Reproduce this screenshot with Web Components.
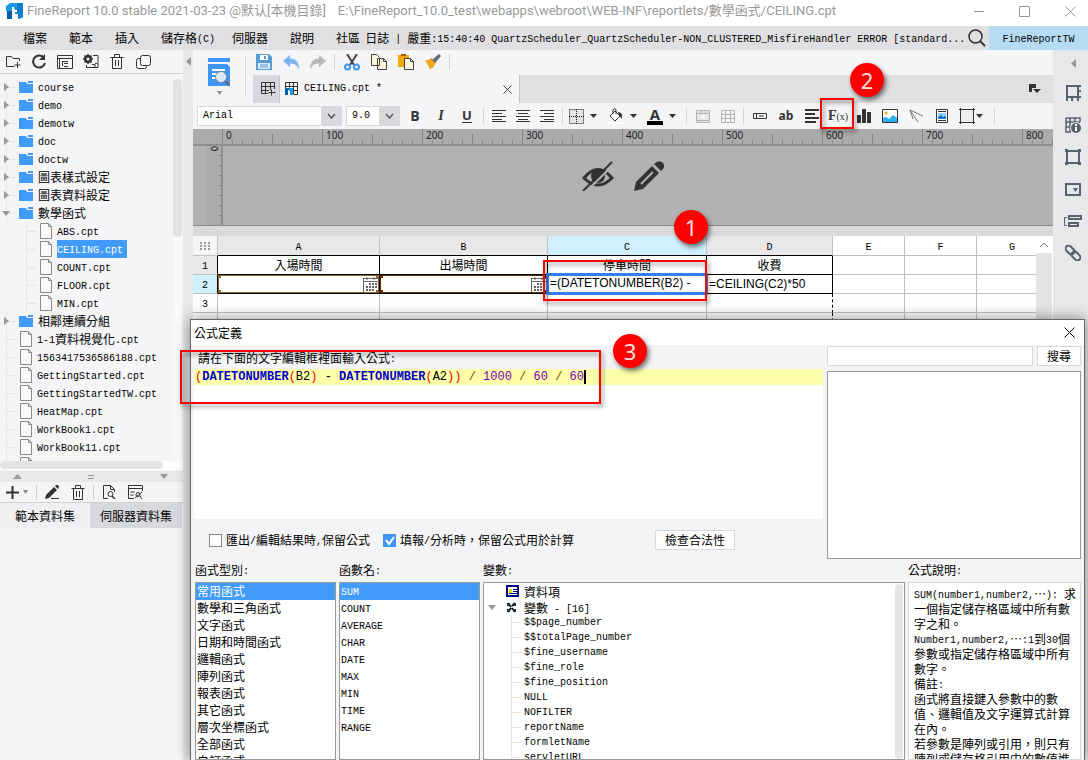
<!DOCTYPE html>
<html lang="zh-Hant">
<head>
<meta charset="utf-8">
<title>FineReport Designer</title>
<style>
html,body{margin:0;height:100%;overflow:hidden}
body{font:12px/18px "Noto Sans CJK TC",sans-serif;color:#000;background:#f5f5f7}
</style>
</head>
<body>
<fr-app></fr-app>
<script>
const BASE = `
*{box-sizing:border-box}
:host{display:block}
button{font:inherit;color:inherit;background:none;border:0;padding:0;margin:0;display:flex;align-items:center;justify-content:center;flex:none}
ul{list-style:none;margin:0;padding:0}
.a{font:10px/10px "Liberation Mono",monospace;white-space:pre;vertical-align:1px}
svg{display:block;flex:none}
`;
// Half-width runs are set in a 6px-advance monospace, full-width runs in the 12px CJK face.
const m = s => s.replace(/[\x20-\x7e]+/g, r => `<span class="a">${r}</span>`);

function define(name, css, html) {
  customElements.define(name, class extends HTMLElement {
    constructor() {
      super();
      this.attachShadow({mode: 'open'});
    }
    connectedCallback() {
      this.shadowRoot.innerHTML = `<style>${BASE}${css}</style>` + (typeof html === 'function' ? html(this) : html);
    }
  });
}

const S = 'fill="none" stroke="#333"';
const ICONS = {
  logo: [17,17,'<path d="M4 0h13v14l-4 2v-5H9V6H6v2H0V3z" fill="#1798e0"/><path d="M11 0h6v14l-5 2v-5h-1z" fill="#0a7fd0"/><path d="M1 8h5v8H1z" fill="#0b5fa8"/><path d="M6 4h2v8H6zM8 7h3v2H8z" fill="#fff"/>'],
  newfolder: [16,14,`<path d="M14.500 6V3.500H8L6.500 1.500H1.500v10h8M12.500 7v6M9.500 10h6" ${S}/>`],
  refresh: [15,15,`<path d="M12 4A6 6 0 1 0 13 9" ${S} stroke-width="2"/><path d="M13 0v6H7z" fill="#333"/>`],
  listbox: [16,14,`<path d="M.5.5h15v13H.500zM.5 3.500h15M2.500 3.500v10M5 6.500h6M5.500 6v5M7 8.500h4M7 11.500h4" ${S}/>`],
  gearbox: [16,15,`<circle cx="5" cy="5" r="3" ${S} stroke-width="2"/><path d="M5 0v10M0 5h10M1.500 1.500l7 7M8.500 1.500l-7 7" stroke="#333" stroke-width="1.500"/><circle cx="5" cy="5" r="1.500" fill="#f5f5f7"/><path d="M10 1.500h5v12H3.500V11M9 10.500h3v3M12 9.500h2" ${S}/>`],
  trash: [14,15,`<path d="M.5 3.500h13M4.500 3V.500h5V3M2.500 4v10.500h9V4M5.500 6v6M8.500 6v6" ${S}/>`],
  copies: [15,14,`<rect x="4.500" y=".5" width="10" height="10" rx="2" ${S}/><path d="M4 3.500H2.500a2 2 0 0 0-2 2v6a2 2 0 0 0 2 2h6a2 2 0 0 0 2-2V11" ${S}/>`],
  folder: [14,12,'<path d="M0 1h7l1 2h6v9H0z" fill="#419bf9"/><path d="M9 0h5v2H9z" fill="#419bf9"/>'],
  file: [12,16,'<path d="M.5.5h8l3 3v12H.500z" fill="#fafafa" stroke="#888"/><path d="M8.500.5v3h3" fill="none" stroke="#888"/>'],
  right: [5,8,'<path d="M0 0l5 4-5 4z" fill="#999"/>'],
  left: [5,9,'<path d="M5 0v9L0 4.500z" fill="#999"/>'],
  down: [8,5,'<path d="M0 0h8L4 5z" fill="#999"/>'],
  sdown: [5,4,'<path d="M0 0h5L2.500 4z" fill="#888"/>'],
  up: [9,5,'<path d="M0 5h9L4.500 0z" fill="#999"/>'],
  grip: [6,4,'<path d="M0 .5h6M0 3.500h6" stroke="#999"/>'],
  tri: [7,4,'<path d="M0 0h7L3.500 4z" fill="#333"/>'],
  plus: [13,13,'<path d="M6.500 0v13M0 6.500h13" stroke="#333" stroke-width="2"/>'],
  pen: [14,14,'<path d="M1 10l8-8 3 3-8 8-4 1zM10 1l1-1h2l1 2-1 2z" fill="#333"/><path d="M6 13.500h8" stroke="#333"/>'],
  docfind: [13,14,`<path d="M5 13.500H.500V.500h7l4 4V7M7.500.5v4h4" ${S}/><circle cx="7.500" cy="9" r="2.500" ${S}/><path d="M9 11l3 3" ${S} stroke-width="1.500"/>`],
  panelfind: [15,14,`<path d="M6 13.500H.500V.500h14V6M.5 3.500h14M2.500 7h4M2.500 10h3" ${S}/><circle cx="10" cy="9.500" r="2" ${S}/><path d="M14 7l-7 6M12 11l2 3" ${S}/>`],
  search: [18,18,`<circle cx="7.500" cy="7.500" r="6.500" ${S} stroke-width="1.500"/><path d="M12 12l5 5" ${S} stroke-width="2"/>`],
  preview: [22,29,'<path d="M0 0h22v4H0zM0 6h19l3 3v19H0z" fill="#3d95f5"/><path d="M4 12h13M4 16h5M4 20h4" stroke="#fff" stroke-width="2"/><circle cx="13" cy="19" r="5" fill="#d8e9f8" stroke="#fff" stroke-width="1"/><circle cx="13" cy="19" r="5.500" fill="none" stroke="#7a8794"/><path d="M17 23l4 4" stroke="#667" stroke-width="2"/>'],
  save: [16,16,'<path d="M0 0h13l3 3v13H0z" fill="#5a9bd9"/><path d="M4 1h8v5H4z" fill="#fff"/><path d="M2 9h12v6H2z" fill="#dbe9f7"/><path d="M8 2h2v3H8z" fill="#5a9bd9"/><path d="M4 11h8M4 13h8" stroke="#5a9bd9"/>'],
  undo: [16,15,'<path d="M0 6l7-6v3.500c6 0 9 4 9 11-2-4-4-6-9-6V12z" fill="#7ab3ee"/>'],
  redo: [16,15,'<path d="M16 6L9 0v3.500c-6 0-9 4-9 11 2-4 4-6 9-6V12z" fill="#b8b8ba"/>'],
  cut: [16,17,'<path d="M3 0l7 11M13 0L6 11" stroke="#444" stroke-width="2"/><circle cx="3.500" cy="13" r="2.500" fill="none" stroke="#3d95f5" stroke-width="2"/><circle cx="12.500" cy="13" r="2.500" fill="none" stroke="#3d95f5" stroke-width="2"/>'],
  copy: [16,16,'<path d="M.5.500h5l3 3v8h-8zM6.500 4.500h6l3 3v8h-9z" fill="#fff4dc" stroke="#444"/><path d="M12.500 4.500v3h3" fill="none" stroke="#444"/>'],
  paste: [16,16,'<path d="M0 1h11v12H0z" fill="#f5a800"/><path d="M3 0h5v2H3z" fill="#a35b14"/><path d="M6.500 4.500h6l3 3v8h-9z" fill="#fff4dc" stroke="#444"/><path d="M12.500 4.500v3h3" fill="none" stroke="#444"/>'],
  brush: [16,16,'<path d="M14 0l2 2-6 7-3-3z" fill="#5c6b7c"/><path d="M6 4l5 5-1 1-5-5z" fill="#c97f10"/><path d="M5 5l5 5c-1 3-2 4-5 5L0 6c3 0 3 0 5-1z" fill="#f3a71b"/>'],
  addtab: [15,14,`<path d="M7 11.500H.500V.500h13V7M.5 4.500h13M.5 8.500H8M4.500.5v11M9.500.5V8M10.500 7.500v6M7.500 10.500h7" ${S}/>`],
  cpt: [14,14,'<path d="M.5 6V.500h12v12H9M.5 4.500h12M4.500.5v5M8.500.5v12M8 8.500h4" fill="none" stroke="#333"/><path d="M0 6h5v3H3v4H0z" fill="#0a5fb0"/><path d="M4 6h4v7H5V9H4z" fill="#1aa0e8"/><path d="M3 8h1v5H3z" fill="#fff"/>'],
  x: [9,9,'<path d="M.5.500l8 8M8.500.500l-8 8" stroke="#444" fill="none"/>'],
  closebig: [11,11,'<path d="M.5.500l10 10M10.500.500l-10 10" stroke="currentColor" fill="none"/>'],
  max: [11,11,'<path d="M.5.500h10v10H.500z" stroke="#999" fill="none"/>'],
  min: [10,11,'<path d="M0 5.500h10" stroke="#999"/>'],
  corner: [12,10,'<path d="M0 0h7v4H3v4H0z" fill="#333"/><path d="M4 5h8L8 9z" fill="#333"/>'],
  chev: [9,6,'<path d="M1 1l3.500 4L8 1" fill="none" stroke="#555" stroke-width="1.500"/>'],
  chevup: [10,6,'<path d="M1 5l4-4 4 4" fill="none" stroke="#777"/>'],
  alignl: [14,12,`<path d="M0 .5h14M0 3.500h10M0 6.500h14M0 9.500h10M0 11.500h14" ${S}/>`],
  alignc: [14,12,`<path d="M0 .5h14M2 3.500h10M0 6.500h14M2 9.500h10M0 11.500h14" ${S}/>`],
  alignr: [14,12,`<path d="M0 .5h14M4 3.500h10M0 6.500h14M4 9.500h10M0 11.500h14" ${S}/>`],
  border: [15,15,'<path d="M.5.500h14v14H.500zM7.500 0v15M0 7.500h15" fill="#e4e4e6" stroke="#111" stroke-dasharray="1 1"/>'],
  fill: [16,16,'<path d="M2 8l5-5 5 5-5 5z" fill="#fff" stroke="#333"/><path d="M5 6V2q2-3 3 0v4" fill="none" stroke="#333"/><path d="M10 4q5 0 4 7-1-2-3-3z" fill="#333"/><path d="M0 14h16v2H0z" fill="#fff"/>'],
  merge: [14,13,'<path d="M.5.500h13v12H.500zM.5 3.500h13M4.500.5v3M9.500.5v3M.5 10.500h13" fill="#e6e6e8" stroke="#b4b4b6"/><path d="M5 5h4v4H5z" fill="#f8f8f8"/>'],
  grid: [14,13,'<path d="M.5.500h13v12H.500zM.5 4.500h13M.5 8.500h13M4.500.5v12M9.500.5v12" fill="none" stroke="#b4b4b6"/>'],
  widget: [14,6,`<path d="M.5.500h13v5H.500zM3.500.5v5M6 3h5" ${S}/>`],
  lines: [15,14,'<path d="M0 1h14M0 5h10M0 9h14M0 13h11" stroke="#333" stroke-width="2"/>'],
  chart: [14,14,'<path d="M0 6h4v8H0zM5 0h4v14H5zM10 3h4v11h-4z" fill="#333"/>'],
  image: [16,14,'<path d="M.5.500h15v13H.500z" fill="#fff" stroke="#333"/><path d="M1 9l3-1 3 2 4-4 4 3v4H1z" fill="#2ab0f2"/><circle cx="4" cy="4" r="1.500" fill="#f5a800"/>'],
  slash: [14,14,'<path d="M14 7L1 1l8 12M1 1l3 9" fill="none" stroke="#777"/>'],
  report: [12,14,'<path d="M.5.500h11v13H.500z" fill="#fff" stroke="#333"/><path d="M2 2.500h8M2 11.500h8" stroke="#333"/><path d="M2 4h8v6H2z" fill="#8ed2fa"/><path d="M2 8l3-2 2 2 3-1v3H2z" fill="#0b77d0"/>'],
  shape: [16,16,'<path d="M1.500 1.500h13v13h-13z" fill="#eee" stroke="#333"/><path d="M0 1.500h3M1.500 0v3M13 1.500h3M14.500 0v3M0 14.500h3M1.500 13v3M13 14.500h3M14.500 13v3" stroke="#333"/>'],
  eyeoff: [32,30,'<path d="M2 17q14-17 28 0-14 14-28 0z" fill="none" stroke="#333" stroke-width="3"/><circle cx="16" cy="15" r="7" fill="#333"/><path d="M32 3L5 30" stroke="#b2b2b2" stroke-width="2"/><path d="M30 1L1 30" stroke="#333" stroke-width="2"/>'],
  bigpen: [30,30,'<path d="M0 30l2-9L18 5l7 7L9 28z" fill="#333"/><path d="M20 3q5-5 9-1 3 4-2 8z" fill="#333"/><path d="M7 23L19 11" stroke="#b2b2b2" stroke-width="2"/>'],
  r1: [17,17,'<path d="M2 1h11v11H2zM13 1h3M13 6h3M13 12h3M2 12v4M7 12v4M13 12v4" fill="none" stroke="#596070" stroke-width="2"/>'],
  r2: [17,17,'<path d="M1 1h14v4M1 1v14h5M1 5h14M5 1v14M10 1v4M1 10h5" fill="none" stroke="#596070" stroke-width="1.500"/><circle cx="11" cy="11" r="6" fill="#e8e8ea"/><circle cx="11" cy="11" r="5" fill="#596070"/><path d="M11 10v4M11 7v2" stroke="#fff" stroke-width="2"/>'],
  r3: [16,16,'<path d="M2 2h12v12H2z" fill="none" stroke="#596070" stroke-width="2"/><path d="M0 0h3v3H0zM13 0h3v3h-3zM0 13h3v3H0zM13 13h3v3h-3z" fill="#596070"/>'],
  r4: [16,13,'<path d="M1 1h14v11H1z" fill="none" stroke="#596070" stroke-width="2"/><path d="M8 5h5l-2.500 4z" fill="#596070"/>'],
  r5: [18,13,'<path d="M5 1h12v3H5zM5 8h9v3H5z" fill="none" stroke="#596070" stroke-width="2"/><path d="M3 2.500H.500v8H3" fill="none" stroke="#596070"/>'],
  r6: [16,16,'<g fill="none" stroke="#596070" stroke-width="2"><rect x="0" y="2" width="10" height="6" rx="3" transform="rotate(45 5 5)"/><rect x="6" y="8" width="10" height="6" rx="3" transform="rotate(45 11 11)"/></g>'],
  cal: [15,15,'<path d="M.5 1v14M0 1.500h15M0 4.500h15M4 0v3M11 0v3" fill="none" stroke="#666" stroke-width="1"/><path d="M6 7h9M3 10h12M3 13h9" stroke="#666" stroke-width="2" stroke-dasharray="2 1"/>'],
  dots: [10,8,'<path d="M0 1h10M0 4h10M0 7h10" stroke="#999" stroke-width="2" stroke-dasharray="2 2"/>'],
  data: [13,12,'<path d="M1 1h11v10H1z" fill="#fff" stroke="#00008b" stroke-width="2"/><path d="M3 4h3v4H3z" fill="#dd0"/><path d="M7 4.500h4M7 6.500h4M3 8.500h8" stroke="#00008b"/>'],
  vars: [11,11,'<path d="M2 1l3 4M9 1L6 4M2 10l3-4M9 10L6 6" stroke="#111" stroke-width="2"/><path d="M1 1h3v3H1zM7 1h3v3H7zM1 7h3v3H1zM7 7h3v3H7z" fill="#234"/>']
};
define('fr-icon', ':host{display:block;flex:none}', e => {
  const [w, h, p] = ICONS[e.getAttribute('name')];
  return `<svg width="${w}" height="${h}" viewBox="0 0 ${w} ${h}" aria-hidden="true">${p}</svg>`;
});
const ic = n => `<fr-icon name="${n}"></fr-icon>`;
const btn = (n, label, cls = '') => `<button class="${cls}" aria-label="${label}">${ic(n)}</button>`;

define('fr-titlebar', `
:host{display:flex;align-items:center;height:26px;background:#fff;color:#999;font:13px/20px Roboto,"Noto Sans CJK TC",sans-serif;padding:0 12px 4px 6px;white-space:nowrap;flex:none}
.n{margin:0 12px 0 4px}.s{flex:1;overflow:hidden}
.w{display:flex;gap:35px}`, `
${ic('logo')}<span class="n">FineReport 10.0 stable 2021-03-23 @默认[本機目錄]</span>
<span class="s">E:\\FineReport_10.0_test\\webapps\\webroot\\WEB-INF\\reportlets/數學函式/CEILING.cpt</span>
<div class="w">${btn('min','最小化')}${btn('max','最大化')}${btn('closebig','關閉')}</div>`);

define('fr-menubar', `
:host{display:flex;align-items:center;height:24px;background:#e0e0e3;flex:none;white-space:nowrap}
nav{display:flex;gap:22px;padding-left:23px}
.t{margin-right:-5px}
.log{margin-left:5px;flex:1;overflow:hidden}
.user{width:99px;height:24px;background:#b6dcf5}
.q{width:24px}`, `
<nav>${['檔案','範本','插入'].map(t => `<button>${t}</button>`).join('')}<button class="t"><span>${m('儲存格(C)')}</span></button><button>伺服器</button><button>說明</button><button>社區</button></nav>
<div class="log">${m('日誌 | 嚴重:15:40:40 QuartzScheduler_QuartzScheduler-NON_CLUSTERED_MisfireHandler ERROR [standard...')}</div>
<button class="q" aria-label="搜尋">${ic('search')}</button><button class="user"><span>${m('FineReportTW')}</span></button>`);

const TREE = [['course',0],['demo',0],['demotw',0],['doc',0],['doctw',0],['圖表樣式設定',0],['圖表資料設定',0],['數學函式',1],['ABS.cpt',2],['CEILING.cpt',3],['COUNT.cpt',2],['FLOOR.cpt',2],['MIN.cpt',2],['相鄰連續分組',0],['1-1資料視覺化.cpt',4],['1563417536586188.cpt',4],['GettingStarted.cpt',4],['GettingStartedTW.cpt',4],['HeatMap.cpt',4],['WorkBook1.cpt',4],['WorkBook11.cpt',4],['WorkBook2.cpt',4]];
define('fr-sidebar', `
:host{display:flex;flex-direction:column;width:183px;flex:none;background:#f5f5f7}
.bar{display:flex;align-items:center;height:24px;border-bottom:1px solid #d0d0d4;flex:none}
.bar button{width:26px}
.tree{display:flex;height:387px;overflow:hidden;flex:none}
.tree ul{flex:1;padding-top:4px;overflow:hidden}
li{display:flex;align-items:center;height:18px;white-space:nowrap;background:linear-gradient(#e6e6ea,#e6e6ea) 6px 9px/10px 1px no-repeat,linear-gradient(#e6e6ea,#e6e6ea) 6px 0/1px 18px no-repeat}
.k{width:20px;flex:none;padding-left:4px}.k.o{padding-left:2px}
.k.d{width:19px}
.l2 .k{width:40px}.l2{background:linear-gradient(#e6e6ea,#e6e6ea) 26px 9px/10px 1px no-repeat,linear-gradient(#e6e6ea,#e6e6ea) 26px 0/1px 18px no-repeat}
li>fr-icon{margin-right:5px}
.sel b{background:#419bf9;color:#fff;padding-right:4px}
b{font-weight:400;line-height:18px}
.vs{width:9px;margin:5px 1px 0 0;background:#fafafa}.vs i{display:block;height:158px;border-radius:4px;background:#e2e2e4}
.hs{height:9px;background:#fff;flex:none}.hs i{display:block;width:163px;height:8px;border-radius:4px;background:#e4e4e6}
.sp{height:11px;background:#e8e8ea;display:flex;align-items:center;justify-content:space-between;padding:0 15px 0 13px;flex:none;margin-top:1px}
.bar2{height:21px}
.bar2 s{width:1px;height:15px;background:#d0d0d4;margin:0 2px}
.bar2 .p{gap:4px;width:34px}
.tabs{display:flex;height:25px}.tabs button{flex:1;background:#f0f0f2;height:25px}.tabs .on{background:#d8d9dc;flex:none;width:92px;margin-right:1px}`, `
<div class="bar">${btn('newfolder','新增資料夾')}${btn('refresh','重新整理')}${btn('listbox','瀏覽')}${btn('gearbox','設定')}${btn('trash','刪除')}${btn('copies','複製')}</div>
<div class="tree"><ul role="tree">${TREE.map(([t,k]) => `<li role="treeitem" class="${k==2||k==3?'l2':''} ${k==3?'sel':''}"><span class="k ${k==1?'o':''} ${k<2?'d':''}">${k==0?ic('right'):k==1?ic('down'):''}</span>${ic(k<2?'folder':'file')}<b>${m(t)}</b></li>`).join('')}</ul><div class="vs"><i></i></div></div>
<div class="hs"><i></i></div>
<div class="sp">${ic('up')}${ic('grip')}${ic('down')}</div>
<div class="bar bar2"><button class="p" aria-label="新增">${ic('plus')}${ic('sdown')}</button><s></s>${btn('pen','編輯')}${btn('trash','刪除')}<s></s>${btn('docfind','預覽')}${btn('panelfind','連線')}</div>
<div class="tabs" role="tablist"><button role="tab">範本資料集</button><button role="tab" class="on">伺服器資料集</button></div>`);

define('fr-combo', `
:host{display:block;height:20px;border:1px solid #d8d8dc;background:#fff}
.b{display:grid;grid-template-columns:1fr 20px;height:18px}
select{appearance:none;grid-area:1/1/2/3;border:0;background:none;margin:0;padding:0 0 0 5px;font:10px/18px "Liberation Mono",monospace;color:#000;width:100%}
.c{grid-area:1/2;background:#d8d9dc;display:flex;align-items:center;justify-content:center;pointer-events:none}`,
e => `<div class="b"><span class="c">${ic('chev')}</span><select aria-label="${e.getAttribute('label')}"><option>${e.getAttribute('value')}</option></select></div>`);

define('fr-toolbar', `
:host{display:block;background:#f5f5f7;flex:none}
.top{display:flex;height:53px}
.pv{width:52px;flex-direction:column;gap:4px}
.v{width:1px;height:41px;margin-top:6px;background:#d4d4d8;flex:none}
.r{flex:1;padding-left:4px}
.row{display:flex;align-items:center;height:24px}
.row .t{width:27px}
s{width:1px;height:16px;background:#d4d4d8;margin:0 3px;flex:none}
.tabs{display:flex;height:28px;margin:1px 0 0 3px;background:#e0e0e3;align-items:stretch}
.add{width:27px;background:#d8d8dc;border-right:1px solid #c4c4c8;padding-left:4px}
.tab{display:flex;align-items:center;gap:5px;width:240px;background:#f5f5f7;border-right:1px solid #c4c4c8;padding:0 7px 0 5px}
.tab span{flex:1}
.cn{margin:0 12px 0 auto}
.fmt{display:flex;align-items:center;height:26px;padding-left:4px}
.f1{width:145px;margin-right:4px}.f2{width:54px;margin-right:2px}
.fmt button{width:26px;height:22px;color:#333}
.fmt .w24{width:24px}.fmt .w25{width:25px}
.fmt .d{width:39px;gap:6px;justify-content:flex-start;padding-left:3px}
.fmt .e{width:36px;gap:1px;justify-content:flex-start;padding-left:4px}
.B{font:700 14px/18px "Open Sans",sans-serif}.I{font:italic 700 14px/18px "Liberation Serif",serif}
.U{font:700 13px/13px "Open Sans",sans-serif;border-bottom:1px solid #333}
.A{font:700 15px/12px "Open Sans",sans-serif;border-bottom:4px solid #000;width:16px;height:17px}
.ab{font:700 12px/16px "Open Sans",sans-serif}
.F{font:700 14px/18px "Liberation Serif",serif}.F small{font-weight:400;font-size:10px}`, `
<div class="top"><button class="pv" aria-label="預覽">${ic('preview')}${ic('sdown')}</button><div class="v"></div>
<div class="r"><div class="row">${btn('save','儲存','t')}${btn('undo','復原','t')}${btn('redo','重做','t')}<s></s>${btn('cut','剪下','t')}${btn('copy','複製','t')}${btn('paste','貼上','t')}${btn('brush','格式刷','t')}<s></s></div>
<div class="tabs">${btn('addtab','新增範本','add')}<div class="tab">${ic('cpt')}<span class="a">CEILING.cpt *</span>${btn('x','關閉')}</div>${btn('corner','範本清單','cn')}</div></div></div>
<div class="fmt"><fr-combo class="f1" label="字型" value="Arial"></fr-combo><fr-combo class="f2" label="字號" value="9.0"></fr-combo>
<button><span class="B">B</span></button><button><span class="I">I</span></button><button><span class="U">U</span></button><s></s>
${btn('alignl','靠左','w24')}${btn('alignc','置中','w24')}${btn('alignr','靠右','w24')}<s></s>
<button class="d" aria-label="框線">${ic('border')}${ic('tri')}</button><button class="d" aria-label="填滿">${ic('fill')}${ic('tri')}</button><button class="d"><span class="A">A</span>${ic('tri')}</button><s></s>
${btn('merge','合併','w25')}${btn('grid','取消合併','w25')}<s></s>
${btn('widget','控件')}<button><span class="ab">ab</span></button>${btn('lines','富文字')}<button><span class="F">F<small>(x)</small></span></button>${btn('chart','圖表')}${btn('image','圖片')}${btn('slash','斜線')}${btn('report','子報表')}<button class="e" aria-label="浮動元素">${ic('shape')}${ic('tri')}</button><s></s></div>`);

define('fr-canvas', `
:host{display:block;background:#b2b2b2;flex:none;height:97px;border-bottom:1px solid #888;overflow:hidden}
.h{display:flex;height:17px;background:#ababab;border-bottom:2px solid #8e8e8e;padding-left:29px}
.h span{width:100px;flex:none;height:15px;border-left:1px solid #888;padding-left:3px;font:10px/13px "Noto Sans",sans-serif;color:#222;background:linear-gradient(#888,#888) 49px 5px/1px 10px no-repeat,repeating-linear-gradient(90deg,transparent 0 9px,#888 9px 10px) 0 11px/100% 4px no-repeat}
.b{display:flex;height:79px}
.v{width:17px;margin-left:13px;background:repeating-linear-gradient(#ababab 0 9px,#888 9px 10px) 12px 0/4px 100% no-repeat #ababab;border-right:2px solid #8e8e8e;writing-mode:vertical-rl;font:9px/14px "Noto Sans",sans-serif}
.m{flex:1;display:flex;gap:20px;padding:15px 0 0 359px;align-items:flex-start}`, `
<div class="h">${[0,1,2,3,4,5,6,7,8].map(i => `<span>${i*100}</span>`).join('')}</div>
<div class="b"><div class="v">0</div><div class="m">${btn('eyeoff','隱藏')}${btn('bigpen','編輯')}</div></div>`);

define('fr-sheet', `
:host{display:flex;background:#fff;flex:1;border-top:10px solid #dadadc;min-height:0}
.g{flex:1;overflow:hidden}
table{table-layout:fixed;border-spacing:0;width:855px}
th,td{height:19px;padding:0;border:solid #c0c0c0;border-width:0 1px 1px 0;font-weight:400;text-align:center;line-height:18px;overflow:hidden;white-space:nowrap}
thead th{height:20px}
th.h{background:#e8e8e8;border-bottom-color:#000}thead th.c{background:#d0f0fb}
tbody th{background:#e8e8e8;border-right-color:#000}tbody th.c{background:#d0f0fb}
tbody th.p{background:#fff;border-right-color:#c0c0c0}
.k{border-color:#000}
.k2{overflow:visible}
.o{height:18px;border:1px solid;display:flex;justify-content:flex-end;align-items:flex-end;background:linear-gradient(currentColor,currentColor) 0 0/2px 2px no-repeat,linear-gradient(currentColor,currentColor) 0 100%/2px 2px no-repeat,linear-gradient(currentColor,currentColor) 100% 0/2px 2px no-repeat,linear-gradient(currentColor,currentColor) 100% 100%/2px 2px no-repeat}
.f{height:18px;font:12px/18px "Liberation Sans",sans-serif;text-align:left;padding-left:2px}
.s{line-height:16px;outline:3px solid #3281e8;outline-offset:-1px;background:#fff;position:relative}
.d{border-right:1px dashed #000}
.cr div{display:flex;justify-content:center}
.cr{background:#f5f5f7}
.sb{width:16px;background:#e4e4e6;margin-right:1px}.sb button{width:16px;height:17px;background:#fff}`, `
<div class="g"><table><colgroup>${[25,162,168,159,126,72,72,71].map(w => `<col style="width:${w}px">`).join('')}</colgroup>
<thead><tr><th class="cr"><div>${ic('dots')}</div></th><th class="h">${m('A')}</th><th class="h">${m('B')}</th><th class="h c">${m('C')}</th><th class="h">${m('D')}</th><th>${m('E')}</th><th>${m('F')}</th><th>${m('G')}</th></tr></thead>
<tbody><tr><th>${m('1')}</th><td class="k">入場時間</td><td class="k">出場時間</td><td class="k">停車時間</td><td class="k">收費</td><td></td><td></td><td></td></tr>
<tr><th class="c">${m('2')}</th><td class="k"><div class="o" style="color:#96632f">${ic('cal')}</div></td><td class="k"><div class="o" style="color:#5e3000">${ic('cal')}</div></td><td class="k k2"><div class="f s">=(DATETONUMBER(B2) -</div></td><td class="k"><div class="f">=CEILING(C2)*50</div></td><td></td><td></td><td></td></tr>
<tr><th class="p">${m('3')}</th><td></td><td></td><td></td><td class="d"></td><td></td><td></td><td></td></tr>
<tr><th class="p">${m('4')}</th><td></td><td></td><td></td><td class="d"></td><td></td><td></td><td></td></tr></tbody></table></div>
<div class="sb">${btn('chevup','向上')}</div>`);

define('fr-rail', `
:host{display:flex;flex-direction:column;width:35px;flex:none;background:#e8e8ea;padding-left:5px}
button{height:32px;width:30px}.f{height:27px}`, `
${btn('left','展開','f')}${['儲存格元素','儲存格屬性','懸浮元素','控件設定','條件屬性','超連結'].map((t,i) => btn('r'+(i+1),t)).join('')}`);

define('fr-list', `
:host{display:block;background:#fff;border:1px solid #999;overflow:hidden}
li{height:17px;line-height:16px;padding-left:1px;white-space:nowrap}
.on{background:#419bf9;color:#fff}`,
e => `<ul role="listbox" aria-label="${e.getAttribute('label')}">${e.getAttribute('items').split(',').map((t,i) => `<li role="option" class="${i?'':'on'}">${m(t)}</li>`).join('')}</ul>`);

define('fr-dialog', `
:host{display:flex;flex-direction:column;background:#f4f4f6;border:1px solid #666;border-bottom:0;box-shadow:0 0 14px rgba(0,0,0,.45);overflow:hidden}
header{display:flex;align-items:center;justify-content:space-between;height:25px;background:#fff;padding:0 9px 0 3px;flex:none}
.up{display:grid;grid-template-columns:1fr 254px;gap:4px;padding:1px 3px 0;flex:none}
.lb{height:23px;line-height:24px;padding-left:4px;white-space:nowrap}
.ed{height:150px;background:linear-gradient(#ffffaa,#ffffaa) 0 0/100% 16px no-repeat #fff;font:12px/16px "Liberation Mono",monospace;padding-left:1px;white-space:pre;outline:0}
.ed b{color:#00c}.ed i{font-style:normal;color:#e00}.ed u{text-decoration:none;color:#7a00b8}.ed em{font-style:normal;color:#804000}
.ed s{display:inline-block;width:2px;height:14px;background:#000;vertical-align:top;margin-top:1px}
.ck{display:flex;align-items:center;height:42px;padding-left:15px;white-space:nowrap}
label{display:flex;align-items:center;gap:4px;margin-right:13px}
input[type=checkbox]{appearance:none;width:13px;height:13px;margin:0;border:1px solid #888;background:#fff;flex:none}
.tick{display:grid}.tick>*{grid-area:1/1}.tick input:checked{background:#3d95f5;border:0}.tick svg{pointer-events:none}
.bt{background:#fff;border:1px solid #d8d8dc;height:20px}
.ver{width:80px;margin-left:68px}
.se{display:flex;gap:4px}
.se input{flex:1;min-width:0;height:20px;border:1px solid #d8d8dc;background:#fff;padding:0 4px;margin:0}
.se button{width:44px}
.res{height:188px;background:#fff;border:1px solid #999;margin-top:5px}
.lo{display:grid;grid-template-columns:141px 141px 1fr 173px;grid-template-rows:21px 1fr;column-gap:3px;padding:0 3px 0 4px;flex:1;min-height:0}
.lo h4{margin:0;font-weight:400;font-size:12px;line-height:18px}
.vt{background:#fff;border:1px solid #999;display:flex;overflow:hidden}
.vt ul{flex:1;padding:0 0 0 22px}
.vt li{display:flex;align-items:center;height:15px;line-height:15px;padding-left:18px;white-space:nowrap;background:linear-gradient(#e6e6ea,#e6e6ea) 5px 0/1px 15px no-repeat,linear-gradient(#e6e6ea,#e6e6ea) 5px 7px/10px 1px no-repeat}
.vt li.g{height:16px;padding:0;background:none;gap:5px}
.vt li.x{margin-left:-18px;gap:0}.x fr-icon{margin-right:10px}.x fr-icon+fr-icon{margin-right:7px}
.vs{width:8px;border-radius:4px;background:#e6e6e8;margin:1px 1px 0 0}
.ds{background:#fff;border:1px solid #d8d8dc;padding:3px 4px 0 5px;line-height:15px;white-space:nowrap;overflow:hidden}
.ds p{margin:0;height:15px}`, `
<header><span>公式定義</span>${btn('closebig','關閉')}</header>
<div class="up"><div><div class="lb">${m('請在下面的文字編輯框裡面輸入公式:')}</div>
<div class="ed" role="textbox" contenteditable="true" spellcheck="false" aria-label="公式"><i>(</i><b>DATETONUMBER</b><i>(</i>B2<i>)</i> - <b>DATETONUMBER</b><i>(</i>A2<i>))</i> <em>/</em> <u>1000</u> <em>/</em> <u>60</u> <em>/</em> <u>60</u><s></s></div>
<div class="ck"><label><input type="checkbox"><span>${m('匯出/編輯結果時,保留公式')}</span></label><label><span class="tick"><input type="checkbox" checked><svg width="13" height="13"><path d="M3 6l3 4 5-7" fill="none" stroke="#fff" stroke-width="2"/></svg></span><span>${m('填報/分析時，保留公式用於計算')}</span></label><button class="bt ver">檢查合法性</button></div></div>
<div><div class="se"><input type="text" aria-label="搜尋函式"><button class="bt">搜尋</button></div><div class="res"></div></div></div>
<div class="lo"><h4>${m('函式型別:')}</h4><h4>${m('函數名:')}</h4><h4>${m('變數:')}</h4><h4>${m('公式說明:')}</h4>
<fr-list label="函式型別" items="常用函式,數學和三角函式,文字函式,日期和時間函式,邏輯函式,陣列函式,報表函式,其它函式,層次坐標函式,全部函式,自訂函式"></fr-list>
<fr-list label="函數名" items="SUM,COUNT,AVERAGE,CHAR,DATE,MAX,MIN,TIME,RANGE"></fr-list>
<div class="vt"><ul role="tree"><li class="g">${ic('data')}<span>資料項</span></li><li class="g x">${ic('down')}${ic('vars')}<span>${m('變數 - [16]')}</span></li>${['$$page_number','$$totalPage_number','$fine_username','$fine_role','$fine_position','NULL','NOFILTER','reportName','formletName','servletURL'].map(t => `<li>${m(t)}</li>`).join('')}</ul><div class="vs"></div></div>
<div class="ds">${['SUM(number1,number2,…): 求','一個指定儲存格區域中所有數','字之和。','Number1,number2,…:1到30個','參數或指定儲存格區域中所有','數字。','備註:','函式將直接鍵入參數中的數','值、邏輯值及文字運算式計算','在內。','若參數是陣列或引用，則只有','陣列或儲存格引用中的數值進'].map(t => `<p>${m(t)}</p>`).join('')}</div></div>`);

define('fr-note', `
:host{position:absolute;z-index:5;pointer-events:none}
.n{width:34px;height:34px;border-radius:50%;background:#f00;color:#f4e0e0;font:22px/34px "Noto Sans",sans-serif;text-align:center;box-shadow:2px 3px 5px rgba(0,0,0,.55)}
.b{height:100%;border:2px solid #f00;filter:drop-shadow(2px 3px 2px rgba(0,0,0,.45))}`,
e => e.hasAttribute('n') ? `<div class="n">${e.getAttribute('n')}</div>` : '<div class="b"></div>');

define('fr-app', `
:host{display:flex;flex-direction:column;height:100vh;position:relative;overflow:hidden}
.body{display:flex;flex:1;min-height:0}
.split{width:10px;background:#e8e8ea;display:flex;justify-content:center;padding-top:7px;flex:none}
main{flex:1;display:flex;flex-direction:column;min-width:0}
fr-dialog{position:absolute;left:190px;right:3px;top:319px;bottom:0}`, `
<fr-titlebar></fr-titlebar><fr-menubar></fr-menubar>
<div class="body"><fr-sidebar></fr-sidebar><div class="split">${ic('left')}</div>
<main><fr-toolbar></fr-toolbar><fr-canvas></fr-canvas><fr-sheet></fr-sheet></main><fr-rail></fr-rail></div>
<fr-dialog role="dialog" aria-label="公式定義"></fr-dialog>
<fr-note style="left:543px;top:260px;width:164px;height:41px"></fr-note>
<fr-note style="left:820px;top:98px;width:34px;height:31px"></fr-note>
<fr-note style="left:180px;top:350px;width:421px;height:54px"></fr-note>
<fr-note n="1" style="left:674px;top:210px"></fr-note>
<fr-note n="2" style="left:850px;top:63px"></fr-note>
<fr-note n="3" style="left:613px;top:334px"></fr-note>`);
</script>
</body>
</html>
